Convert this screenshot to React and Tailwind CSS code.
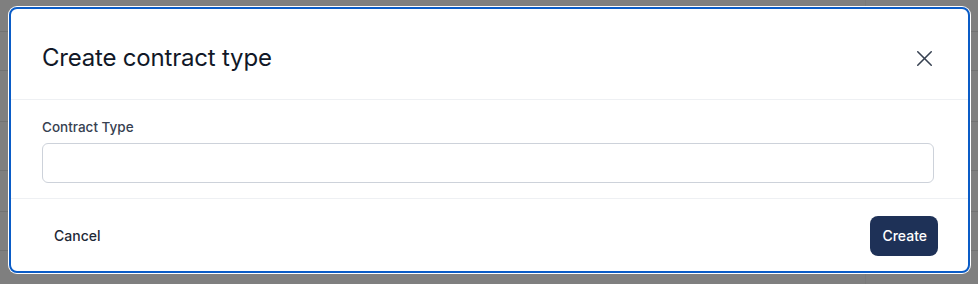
import { X } from 'lucide-react';

function Backdrop() {
  const rows = [32, 39, 51, 49, 41, 39];
  return (
    <div className="absolute inset-0 bg-[#7f7f7f]">
      {rows.map((h, i) => (
        <div key={i} className="border-b border-[#727272]" style={{ height: h }} />
      ))}
      <div className="absolute top-0 bottom-0 left-[865px] border-l border-[#7a7a7a]" />
    </div>
  );
}

export default function App() {
  return (
    <div className="relative w-[978px] h-[284px] overflow-hidden font-['Inter',sans-serif]">
      <Backdrop />
      <div className="relative pl-[9px] pr-[8px] pt-[7px]">
        <div className="bg-white rounded-lg border-2 border-[#0a5cc7] ring-1 ring-white h-[266px] flex flex-col">
          <div className="flex items-center justify-between pl-[31px] pr-[30px] pt-[8px] h-[91px] border-b border-[#eef0f3]">
            <h2 className="text-[24px] text-[#111827] tracking-[-0.2px]">Create contract type</h2>
            <X className="w-[27px] h-[27px] text-[#374151]" strokeWidth={1.35} />
          </div>
          <div className="pl-[31px] pr-[34px] pt-[19px] h-[99px] border-b border-[#eef0f3]">
            <label className="block text-[13.5px] font-medium text-[#374151] leading-4 mb-[8px]">Contract Type</label>
            <input className="block w-full h-[40px] rounded-md border border-[#cdd2da] outline-none" />
          </div>
          <div className="flex-1 flex items-center justify-between pl-[31px] pr-[30px] pt-[2px]">
            <button className="px-3 h-[40px] text-sm font-medium text-[#1f2937]">Cancel</button>
            <button className="pl-[12px] pr-[11px] h-[40px] rounded-lg bg-[#1e3157] text-sm font-medium text-white">Create</button>
          </div>
        </div>
      </div>
    </div>
  );
}
